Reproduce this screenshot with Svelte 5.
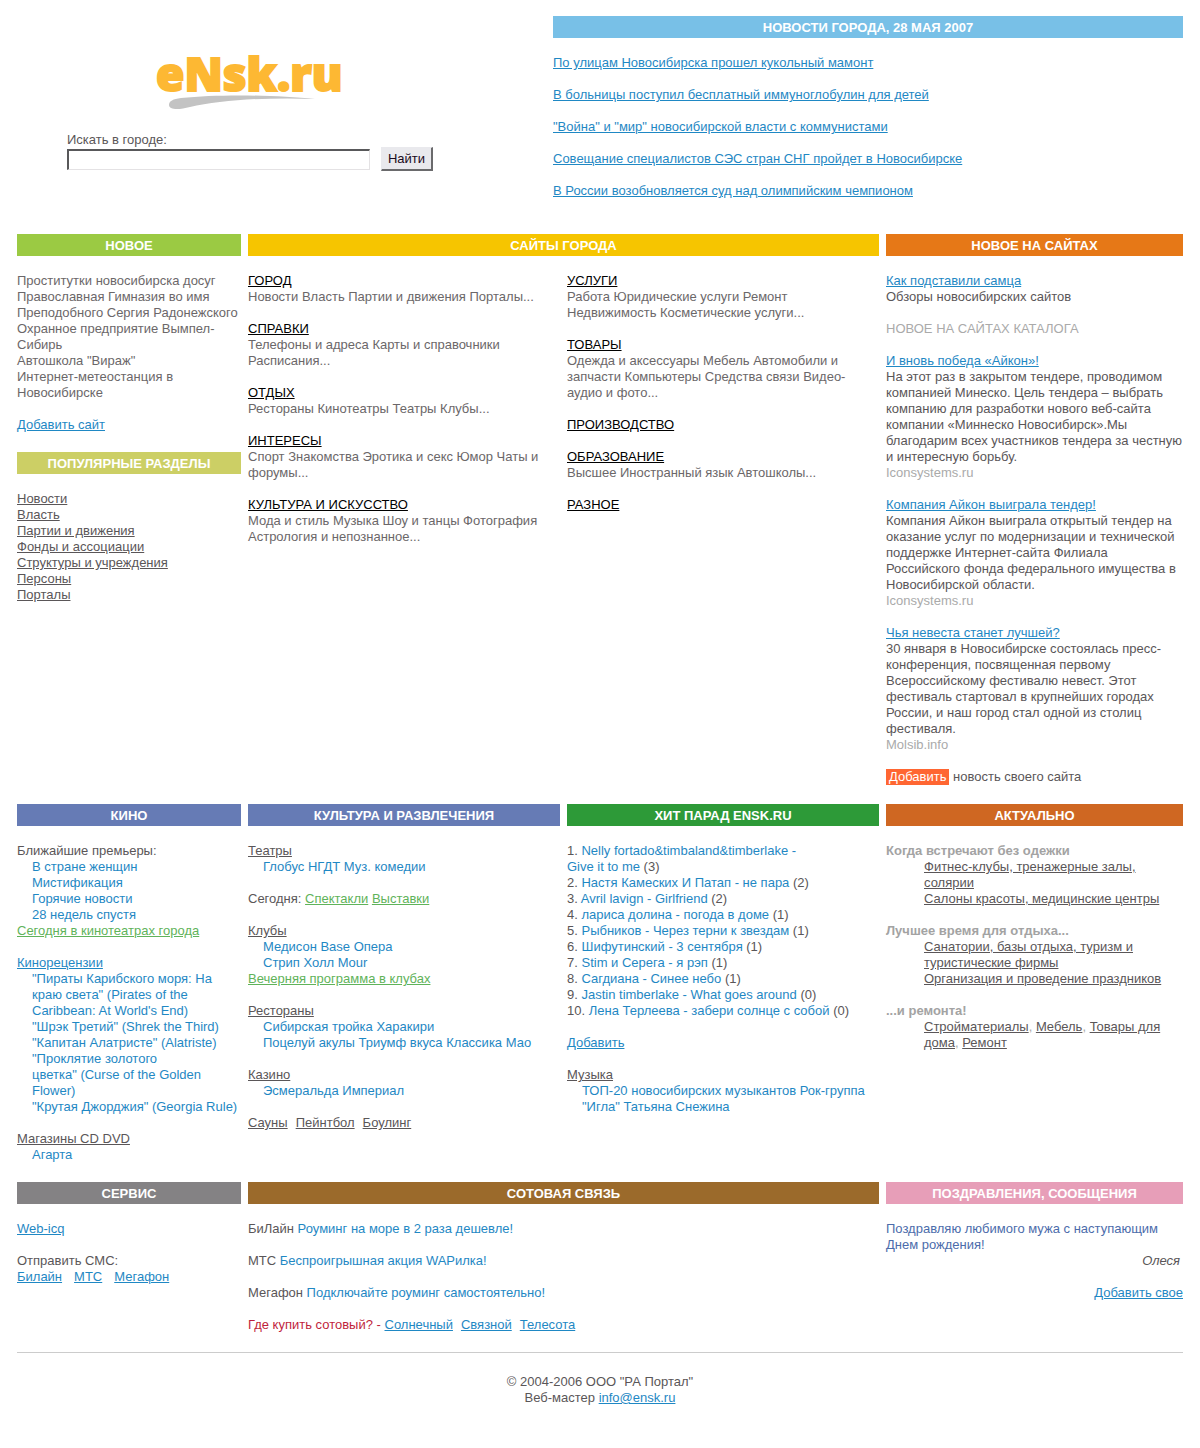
<script>
  const news = [
    'По улицам Новосибирска прошел кукольный мамонт',
    'В больницы поступил бесплатный иммуноглобулин для детей',
    '"Война" и "мир" новосибирской власти с коммунистами',
    'Совещание специалистов СЭС стран СНГ пройдет в Новосибирске',
    'В России возобновляется суд над олимпийским чемпионом',
  ];

  const fresh = [
    'Проститутки новосибирска досуг',
    'Православная Гимназия во имя Преподобного Сергия Радонежского',
    'Охранное предприятие Вымпел-Сибирь',
    'Автошкола "Вираж"',
    'Интернет-метеостанция в Новосибирске',
  ];

  const popular = [
    'Новости',
    'Власть',
    'Партии и движения',
    'Фонды и ассоциации',
    'Структуры и учреждения',
    'Персоны',
    'Порталы',
  ];

  const catalog = [
    [
      { title: 'ГОРОД', text: 'Новости Власть Партии и движения Порталы...' },
      { title: 'СПРАВКИ', text: 'Телефоны и адреса Карты и справочники Расписания...' },
      { title: 'ОТДЫХ', text: 'Рестораны Кинотеатры Театры Клубы...' },
      { title: 'ИНТЕРЕСЫ', text: 'Спорт Знакомства Эротика и секс Юмор Чаты и форумы...' },
      { title: 'КУЛЬТУРА И ИСКУССТВО', text: 'Мода и стиль Музыка Шоу и танцы Фотография Астрология и непознанное...' },
    ],
    [
      { title: 'УСЛУГИ', text: 'Работа Юридические услуги Ремонт Недвижимость Косметические услуги...' },
      { title: 'ТОВАРЫ', text: 'Одежда и аксессуары Мебель Автомобили и запчасти Компьютеры Средства связи Видео-аудио и фото...' },
      { title: 'ПРОИЗВОДСТВО', text: '' },
      { title: 'ОБРАЗОВАНИЕ', text: 'Высшее Иностранный язык Автошколы...' },
      { title: 'РАЗНОЕ', text: '' },
    ],
  ];

  const siteNews = [
    {
      title: 'И вновь победа «Айкон»!',
      text: 'На этот раз в закрытом тендере, проводимом компанией Минеско. Цель тендера – выбрать компанию для разработки нового веб-сайта компании «Миннеско Новосибирск».Мы благодарим всех участников тендера за честную и интересную борьбу.',
      source: 'Iconsystems.ru',
    },
    {
      title: 'Компания Айкон выиграла тендер!',
      text: 'Компания Айкон выиграла открытый тендер на оказание услуг по модернизации и технической поддержке Интернет-сайта Филиала Российского фонда федерального имущества в Новосибирской области.',
      source: 'Iconsystems.ru',
    },
    {
      title: 'Чья невеста станет лучшей?',
      text: '30 января в Новосибирске состоялась пресс-конференция, посвященная первому Всероссийскому фестивалю невест. Этот фестиваль стартовал в крупнейших городах России, и наш город стал одной из столиц фестиваля.',
      source: 'Molsib.info',
    },
  ];

  const premieres = ['В стране женщин', 'Мистификация', 'Горячие новости', '28 недель спустя'];
  const reviews = [
    '"Пираты Карибского моря: На краю света" (Pirates of the Caribbean: At World\'s End)',
    '"Шрэк Третий" (Shrek the Third)',
    '"Капитан Алатристе" (Alatriste)',
    '"Проклятие золотого цветка"\u00a0(Curse of the Golden Flower)',
    '"Крутая Джорджия" (Georgia Rule)',
  ];

  const hits = [
    ['Nelly fortado&timbaland&timberlake - Give\u00a0it\u00a0to\u00a0me', 3],
    ['Настя Камеских И Патап - не пара', 2],
    ['Avril lavign - Girlfriend', 2],
    ['лариса долина - погода в доме', 1],
    ['Рыбников - Через терни к звездам', 1],
    ['Шифутинский - 3 сентября', 1],
    ['Stim и Серега - я рэп', 1],
    ['Сагдиана - Синее небо', 1],
    ['Jastin timberlake - What goes around', 0],
    ['Лена Терлеева - забери солнце с собой', 0],
  ];

  const operators = [
    ['БиЛайн', 'Роуминг на море в 2 раза дешевле!'],
    ['МТС', 'Беспроигрышная акция WAPилка!'],
    ['Мегафон', 'Подключайте роуминг самостоятельно!'],
  ];

  let query = $state('');
</script>

{#snippet plain(names)}
  {#each names as name, i}{#if i}{' '}{/if}<a class="plain" href="#top">{name}</a>{/each}
{/snippet}

<div class="page" id="top">
  <header class="top">
    <div class="brand">
      <a class="logo" href="#top" aria-label="eNsk.ru">
        <svg viewBox="0 -12 200 72" width="200" height="72" aria-hidden="true">
          <text x="6" y="37">eNsk.ru</text>
          <path d="M19 51 C19 47 23 45 31 44 C70 40 125 41 165 45 C120 43 70 46 40 53 C29 56 19 56 19 51 Z" />
        </svg>
      </a>
      <form class="search" onsubmit={(e) => e.preventDefault()}>
        <label for="q">Искать в городе:</label>
        <div class="row">
          <input id="q" type="text" bind:value={query} />
          <button type="submit">Найти</button>
        </div>
      </form>
    </div>
    <section>
      <h2 class="sky">НОВОСТИ ГОРОДА, 28 МАЯ 2007</h2>
      <ul class="news">
        {#each news as item}<li><a href="#top">{item}</a></li>{/each}
      </ul>
    </section>
  </header>

  <main>
    <div class="grid">
      <div class="stack">
        <section>
          <h2 class="lime">НОВОЕ</h2>
          <ul class="grey">
            {#each fresh as item}<li>{item}</li>{/each}
          </ul>
          <p class="gap"><a href="#top">Добавить сайт</a></p>
        </section>
        <section>
          <h2 class="olive">ПОПУЛЯРНЫЕ РАЗДЕЛЫ</h2>
          <ul>
            {#each popular as item}<li><a class="dark" href="#top">{item}</a></li>{/each}
          </ul>
        </section>
      </div>

      <section class="wide">
        <h2 class="yellow">САЙТЫ ГОРОДА</h2>
        <div class="halves">
          {#each catalog as column}
            <div class="groups">
              {#each column as item}
                <div>
                  <h3><a href="#top">{item.title}</a></h3>
                  {#if item.text}<p class="grey">{item.text}</p>{/if}
                </div>
              {/each}
            </div>
          {/each}
        </div>
      </section>

      <section>
        <h2 class="orange">НОВОЕ НА САЙТАХ</h2>
        <div class="groups">
          <div>
            <a href="#top">Как подставили самца</a>
            <p>Обзоры новосибирских сайтов</p>
          </div>
          <p class="pale">НОВОЕ НА САЙТАХ КАТАЛОГА</p>
          {#each siteNews as item}
            <article>
              <a href="#top">{item.title}</a>
              <p>{item.text}</p>
              <p class="pale">{item.source}</p>
            </article>
          {/each}
          <p><a class="badge" href="#top">Добавить</a> новость своего сайта</p>
        </div>
      </section>
    </div>

    <div class="grid">
      <section>
        <h2 class="indigo">КИНО</h2>
        <div class="groups">
          <div>
            <p>Ближайшие премьеры:</p>
            <ul class="indent">
              {#each premieres as item}<li><a class="plain" href="#top">{item}</a></li>{/each}
            </ul>
            <a class="green" href="#top">Сегодня в кинотеатрах города</a>
          </div>
          <div>
            <a href="#top">Кинорецензии</a>
            <ul class="indent">
              {#each reviews as item}<li><a class="plain" href="#top">{item}</a></li>{/each}
            </ul>
          </div>
          <div>
            <a class="dark" href="#top">Магазины CD DVD</a>
            <p class="indent"><a class="plain" href="#top">Агарта</a></p>
          </div>
        </div>
      </section>

      <section>
        <h2 class="indigo">КУЛЬТУРА И РАЗВЛЕЧЕНИЯ</h2>
        <div class="groups">
          <div>
            <a class="dark" href="#top">Театры</a>
            <p class="indent">{@render plain(['Глобус', 'НГДТ', 'Муз. комедии'])}</p>
          </div>
          <p>Сегодня: <a class="green" href="#top">Спектакли</a> <a class="green" href="#top">Выставки</a></p>
          <div>
            <a class="dark" href="#top">Клубы</a>
            <p class="indent">{@render plain(['Медисон', 'Base', 'Опера'])}<br />{@render plain(['Стрип Холл', 'Mour'])}</p>
            <a class="green" href="#top">Вечерняя программа в клубах</a>
          </div>
          <div>
            <a class="dark" href="#top">Рестораны</a>
            <p class="indent">{@render plain(['Сибирская тройка', 'Харакири'])}<br />{@render plain(['Поцелуй акулы', 'Триумф вкуса', 'Классика', 'Мао'])}</p>
          </div>
          <div>
            <a class="dark" href="#top">Казино</a>
            <p class="indent">{@render plain(['Эсмеральда', 'Империал'])}</p>
          </div>
          <p class="links near"><a class="dark" href="#top">Сауны</a><a class="dark" href="#top">Пейнтбол</a><a class="dark" href="#top">Боулинг</a></p>
        </div>
      </section>

      <section>
        <h2 class="forest">ХИТ ПАРАД ENSK.RU</h2>
        <div class="groups">
          <ol class="hits">
            {#each hits as [song, votes], i}
              <li>{i + 1}. <a class="plain" href="#top">{song}</a> ({votes})</li>
            {/each}
          </ol>
          <p><a href="#top">Добавить</a></p>
          <div>
            <a class="dark" href="#top">Музыка</a>
            <p class="indent">{@render plain(['ТОП-20 новосибирских музыкантов', 'Рок-группа "Игла"', 'Татьяна Снежина'])}</p>
          </div>
        </div>
      </section>

      <section>
        <h2 class="rust">АКТУАЛЬНО</h2>
        <dl class="groups">
          <div>
            <dt>Когда встречают без одежки</dt>
            <dd><a class="dark" href="#top">Фитнес-клубы, тренажерные залы, солярии</a></dd>
            <dd><a class="dark" href="#top">Салоны красоты, медицинские центры</a></dd>
          </div>
          <div>
            <dt>Лучшее время для отдыха...</dt>
            <dd><a class="dark" href="#top">Санатории, базы отдыха, туризм и туристические фирмы</a></dd>
            <dd><a class="dark" href="#top">Организация и проведение праздников</a></dd>
          </div>
          <div>
            <dt>...и ремонта!</dt>
            <dd class="pale"><a class="dark" href="#top">Стройматериалы</a>, <a class="dark" href="#top">Мебель</a>, <a class="dark" href="#top">Товары для дома</a>, <a class="dark" href="#top">Ремонт</a></dd>
          </div>
        </dl>
      </section>
    </div>

    <div class="grid">
      <section>
        <h2 class="steel">СЕРВИС</h2>
        <div class="groups">
          <p><a href="#top">Web-icq</a></p>
          <div>
            <p>Отправить СМС:</p>
            <p class="links"><a href="#top">Билайн</a><a href="#top">МТС</a><a href="#top">Мегафон</a></p>
          </div>
        </div>
      </section>

      <section class="wide">
        <h2 class="brown">СОТОВАЯ СВЯЗЬ</h2>
        <div class="groups">
          {#each operators as [name, offer]}
            <p>{name} <a class="plain" href="#top">{offer}</a></p>
          {/each}
          <p class="links near"><span class="red">Где купить сотовый? - <a href="#top">Солнечный</a></span><a href="#top">Связной</a><a href="#top">Телесота</a></p>
        </div>
      </section>

      <section>
        <h2 class="pink">ПОЗДРАВЛЕНИЯ, СООБЩЕНИЯ</h2>
        <p class="wish">Поздравляю любимого мужа с наступающим Днем рождения!</p>
        <p class="author">Олеся</p>
        <p class="gap right"><a href="#top">Добавить свое</a></p>
      </section>
    </div>
  </main>

  <footer>
    <p>© 2004-2006 ООО "РА Портал"</p>
    <p>Веб-мастер <a href="mailto:info@ensk.ru">info@ensk.ru</a></p>
  </footer>
</div>

<style>
  :global(body) {
    background: #fff;
  }
  .page {
    padding: 16px 17px 42px;
    font: 13px/16px 'Liberation Sans', Arial, sans-serif;
    color: #5a5658;
  }
  h2, h3, p, ul, ol, dl, dd {
    margin: 0;
    padding: 0;
  }
  ul, ol {
    list-style: none;
  }
  a {
    color: #1f88c4;
    text-decoration: underline;
  }
  .plain {
    text-decoration: none;
  }
  .dark {
    color: #5a5658;
  }
  .green {
    color: #5fb35a;
  }
  .top {
    display: grid;
    grid-template-columns: 536fr 630fr;
    margin-bottom: 35px;
  }
  .brand {
    display: flex;
    flex-direction: column;
    padding: 26px 120px 0 50px;
  }
  .logo {
    align-self: center;
    height: 72px;
    margin-bottom: 18px;
  }
  .logo svg {
    display: block;
  }
  .logo text {
    font: 800 46px 'Open Sans', sans-serif;
    fill: #fdb833;
    stroke: #fdb833;
    stroke-width: 2px;
  }
  .logo path {
    fill: #c3c3c3;
  }
  .search label {
    display: block;
    line-height: 15px;
  }
  .row {
    display: flex;
    align-items: center;
    gap: 11px;
  }
  .row input {
    flex: 1;
    min-width: 0;
    height: 21px;
    box-sizing: border-box;
    border: 1px solid #e4e2e4;
    border-top: 2px solid #58585a;
    border-left: 2px solid #58585a;
    font: inherit;
  }
  .row button {
    width: 52px;
    height: 24px;
    padding: 0;
    border: 1px solid #e9e9ed;
    border-right: 2px solid #6a6a6c;
    border-bottom: 2px solid #6a6a6c;
    background: #e9e9ed;
    color: #1a0a20;
    font: inherit;
  }
  h2 {
    margin-bottom: 17px;
    padding-top: 2px;
    color: #fff;
    font-size: 13px;
    line-height: 20px;
    text-align: center;
  }
  .sky { background: #78c0e7; }
  .lime { background: #9bca43; }
  .olive { background: #cccf65; }
  .yellow { background: #f6c500; }
  .orange { background: #e67817; }
  .indigo { background: #667bb5; }
  .forest { background: #2d9a38; }
  .rust { background: #cf6722; }
  .steel { background: #848284; }
  .brown { background: #9b6a2b; }
  .pink { background: #e79eb8; }
  .news, .groups {
    display: flex;
    flex-direction: column;
    gap: 16px;
  }
  .grid {
    display: grid;
    grid-template-columns: 224fr 312fr 312fr 297fr;
    gap: 7px;
    margin-bottom: 19px;
  }
  .wide {
    grid-column: span 2;
  }
  .halves {
    display: grid;
    grid-template-columns: 1fr 1fr;
    gap: 7px;
  }
  .halves .groups {
    padding-right: 16px;
  }
  .stack {
    display: flex;
    flex-direction: column;
    gap: 19px;
  }
  .gap {
    margin-top: 16px;
  }
  .grey {
    color: #6b6769;
  }
  h3 {
    font-size: 13px;
    font-weight: normal;
  }
  h3 a {
    color: #000;
  }
  .pale {
    color: #aaa;
  }
  .badge {
    display: inline-block;
    padding: 0 3px;
    background: #ff6632;
    color: #fff;
    text-decoration: none;
  }
  .indent {
    padding-left: 15px;
  }
  .hits li {
    padding-right: 20px;
  }
  .links {
    display: flex;
    flex-wrap: wrap;
    column-gap: 12px;
  }
  .near {
    column-gap: 8px;
  }
  dt {
    color: #a3a3a3;
    font-weight: bold;
  }
  dd {
    padding: 0 20px 0 38px;
  }
  .red {
    color: #bf1f3c;
  }
  .wish {
    color: #4c6cab;
  }
  .author {
    padding-right: 3px;
    font-style: italic;
    text-align: right;
  }
  .right {
    text-align: right;
  }
  footer {
    padding-top: 21px;
    border-top: 1px solid #ccc;
    text-align: center;
  }
</style>
